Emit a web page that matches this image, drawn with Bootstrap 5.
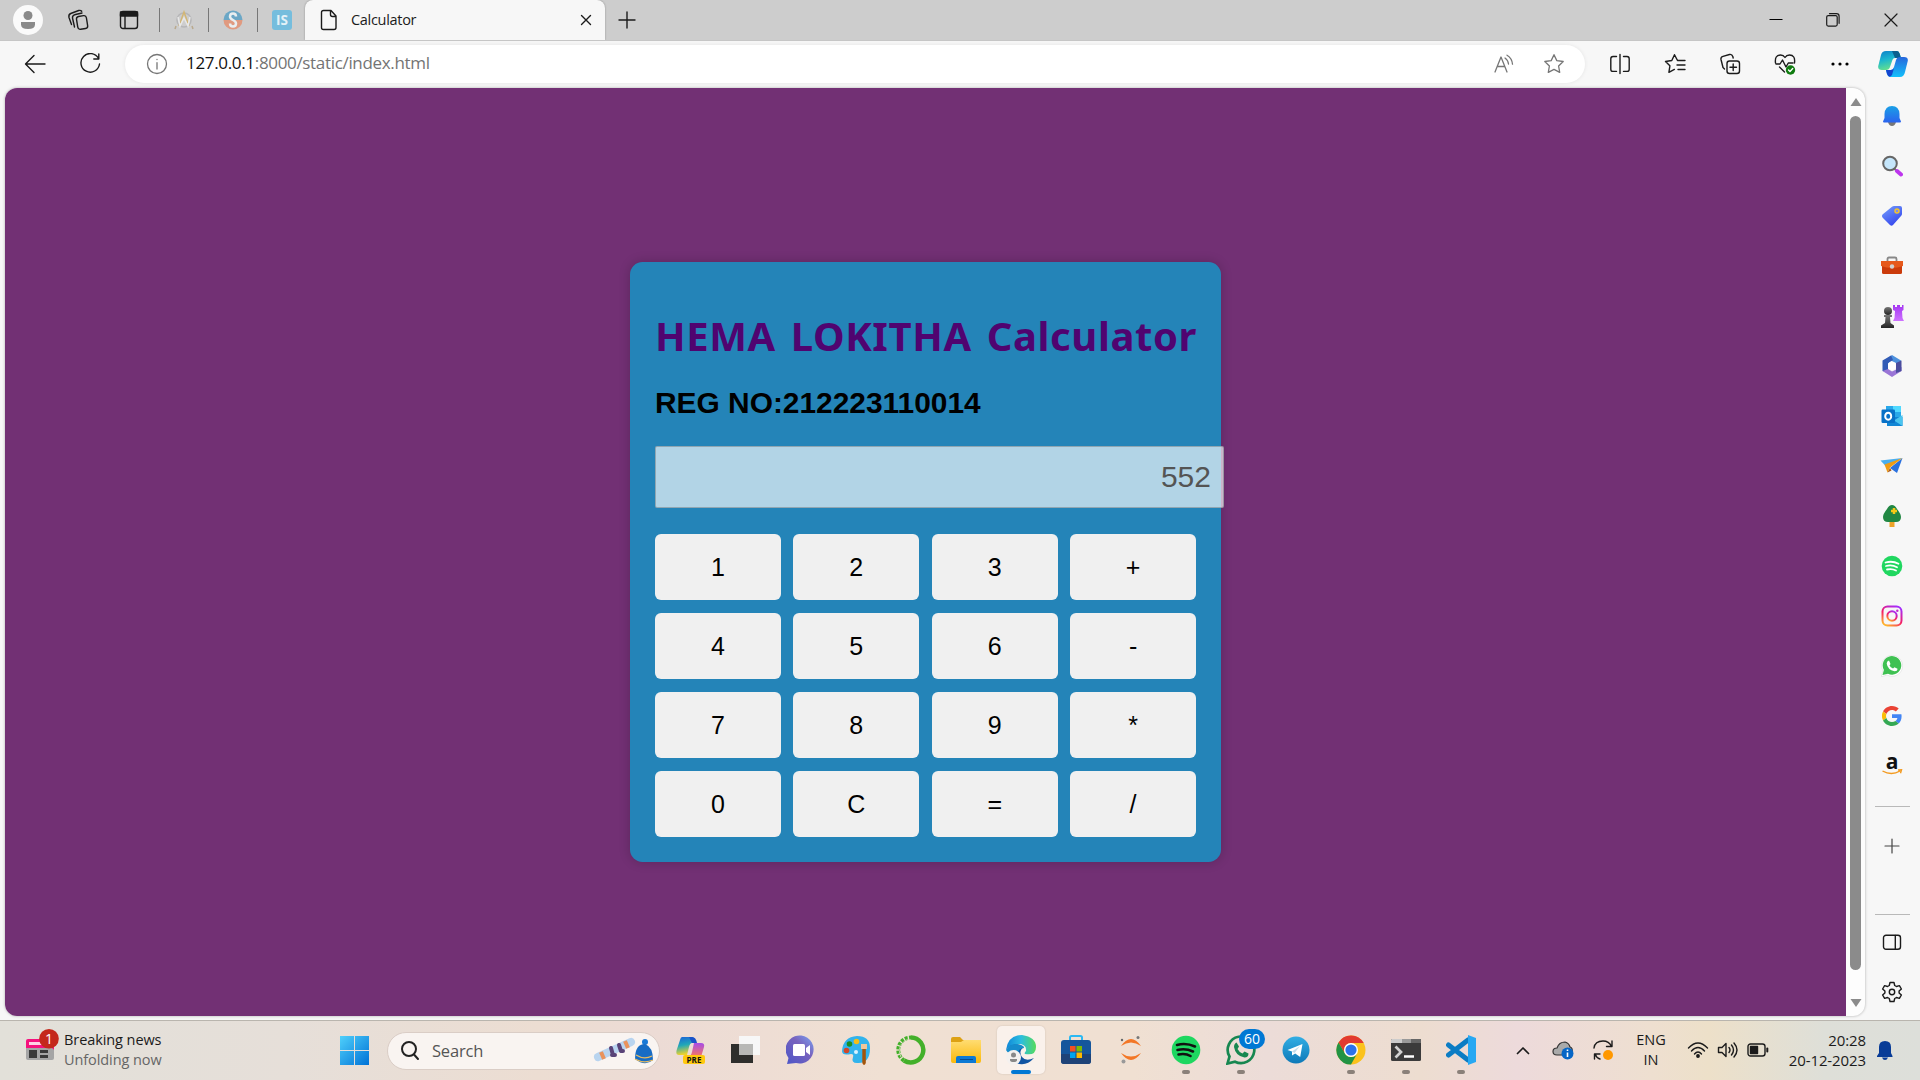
<!DOCTYPE html>
<html lang="en">
<head>
<meta charset="utf-8">
<meta name="viewport" content="width=device-width, initial-scale=1">
<title>Calculator</title>
<link href="https://cdn.jsdelivr.net/npm/bootstrap@5.3.0/dist/css/bootstrap.min.css" rel="stylesheet">
<style>
body{width:1920px;height:1080px;overflow:hidden;background:#f7f7f7;font-family:"Open Sans","Noto Sans",sans-serif;color:#1b1b1b;line-height:1.2}
svg{display:block;flex:none}
.ln{fill:none;stroke:currentColor;stroke-width:1.4;stroke-linecap:round;stroke-linejoin:round}
.tabstrip{height:40px;background:#cdcdcd}
.slot{display:flex;align-items:center;justify-content:center;flex:none;height:100%}
.pinned{width:49px;height:24px;border-left:1px solid #777}
.active-tab{width:300px;height:40px;background:#f7f7f7;border-radius:8px 8px 0 0;font-size:14.5px;padding:0 9px 0 14px;box-shadow:0 0 2px rgba(0,0,0,.35);clip-path:inset(0 -4px 0 -4px)}
.tab-name{letter-spacing:-.3px;margin-left:12px}
.toolbar{height:48px;background:#f7f7f7;border-top:1px solid #c6c6c6;padding:0 0 2px 8px}
.omnibox{width:1460px;height:38px;margin:0 7px;padding:0 6px 0 21px;background:#fff;border-radius:19px;box-shadow:0 0 4px rgba(0,0,0,.08);color:#767676}
.url{font-size:17px;letter-spacing:-.33px;margin-left:18px;color:#747474;white-space:nowrap}
.url b{font-weight:400;color:#111}
.stage{height:932px}
.viewport{width:1860px;height:928px;margin-left:5px;border-radius:12px;background:#fdfdfd;box-shadow:0 0 3px rgba(0,0,0,.3)}
.canvas{width:1841px;background:#723074;padding-top:174px}
.scroller{width:19px;padding:10px 0 9px}
.thumb{width:11px;height:854px;border-radius:6px;background:#8b8b8b;margin-top:10px}
.calc{width:591px;height:600px;padding:25px;border-radius:12.5px;background:#2484b8;box-shadow:0 0 12px rgba(0,0,0,.2);font-family:"Liberation Sans",Arial,sans-serif}
.calc h1{font:700 40px/50px "Noto Sans",sans-serif;color:#500470;margin:24px 0 0;white-space:nowrap;letter-spacing:.6px;word-spacing:4px}
.calc h2{font-size:29.9px;font-weight:700;line-height:36px;margin:24px 0 0;color:#000}
.display{width:569px;height:62px;margin:25px 0 26px;padding:0 12px;font-size:30px;font-family:inherit;color:#545454;background:rgba(255,255,255,.65);border:1px solid rgba(110,120,125,.5);border-radius:2px;text-align:right;opacity:1}
.keys{display:grid;grid-template-columns:repeat(4,1fr);gap:13px 12.5px}
.keys .btn{height:66px;padding:2px 0 0;border:0;border-radius:6px;background:#f0f0f0;color:#000;font-size:25px}
.side{width:54px;padding-top:3px}
.side .slot{height:50px;width:54px}
.rule{width:35px;height:1px;background:#b9b9b9}
.taskbar{height:60px;border-top:1px solid #b9b5ae;background:linear-gradient(90deg,#e2e0d9 0,#e6dfd9 15%,#ecddd2 28%,#ecdbd5 34%,#f0e0d3 46%,#f0e0d2 59%,#ecdcd8 66%,#edddd0 74%,#eddadb 79%,#eedfd0 86%,#ede0c9 89%,#dedfd8 95%,#dddfda 100%)}
.news{width:276px;margin-left:64px;padding-bottom:2px;font-size:14.5px;line-height:20px;letter-spacing:-.08px}
.newsicon{left:24px;top:8px}
.searchbox{width:273px;height:38px;margin:0 3px 0 18px;border-radius:19px;background:#f9f4f1;border:1px solid #dacdc6;padding:0 5px 0 12px;font-size:16.5px;color:#555}
.searchbox span{margin-left:12px;letter-spacing:-.2px}
.task{width:55px;height:59px;padding-bottom:1px}
.task.on::before{content:"";position:absolute;width:48px;height:48px;border-radius:5px;background:#faf1eb;box-shadow:0 0 2px rgba(0,0,0,.15)}
.task svg{position:relative}
.task.run::after,.task.on::after{content:"";position:absolute;left:23.5px;top:49px;width:8px;height:4px;border-radius:2px;background:#8a8079}
.task.on::after{left:18px;width:20px;background:#0078d4}
.count{left:26px;top:8px;width:26px;height:20px;border-radius:10px;background:#0078d4;color:#fff;font-size:14px;line-height:19px;text-align:center}
.tray{font-size:14.5px;line-height:20px;padding-bottom:1px}
.clock{width:90px;white-space:nowrap;font-size:15px;letter-spacing:-.1px;padding-bottom:1px}
</style>
<script src="https://cdn.jsdelivr.net/npm/bootstrap@5.3.0/dist/js/bootstrap.bundle.min.js"></script>
</head>
<body class="d-flex flex-column">
<svg width="0" height="0" class="position-absolute"><defs>
<linearGradient id="gBlue" x2="0" y2="1"><stop stop-color="#1aa0e6"/><stop offset="1" stop-color="#2b63ee"/></linearGradient>
<linearGradient id="gCopA" x2=".3" y2="1"><stop stop-color="#0b7fc9"/><stop offset=".5" stop-color="#1bb6cf"/><stop offset="1" stop-color="#62df90"/></linearGradient>
<linearGradient id="gCopB" x2="0" y2="1"><stop stop-color="#2767dc"/><stop offset="1" stop-color="#13c0fb"/></linearGradient>
<linearGradient id="gPreA" x2=".2" y2="1"><stop stop-color="#1b62d8"/><stop offset=".5" stop-color="#21a8b8"/><stop offset="1" stop-color="#f0d32c"/></linearGradient>
<linearGradient id="gPreB" x2="0" y2="1"><stop stop-color="#a64be8"/><stop offset="1" stop-color="#fa7a5c"/></linearGradient>
<linearGradient id="gWin" x2="1" y2="1"><stop stop-color="#4fd0fb"/><stop offset="1" stop-color="#0072d6"/></linearGradient>
<linearGradient id="gIg" x1=".2" y1="1" x2=".8" y2="0"><stop stop-color="#ffb52b"/><stop offset=".45" stop-color="#f51e64"/><stop offset="1" stop-color="#a32cff"/></linearGradient>
<linearGradient id="gTag" x2=".6" y2="1"><stop stop-color="#77a1fb"/><stop offset="1" stop-color="#3547ee"/></linearGradient>
<linearGradient id="gChat" x1="0" y1="1" x2="1" y2="0"><stop stop-color="#4b55c8"/><stop offset=".6" stop-color="#7863be"/><stop offset="1" stop-color="#7aa5f4"/></linearGradient>
<linearGradient id="gEdge" x2="1"><stop stop-color="#0f86d8"/><stop offset=".5" stop-color="#2cbde0"/><stop offset="1" stop-color="#55db5b"/></linearGradient>
<linearGradient id="gFold" x2="0" y2="1"><stop stop-color="#ffdc72"/><stop offset="1" stop-color="#fbb90a"/></linearGradient>
<linearGradient id="gTele" x2="0" y2="1"><stop stop-color="#32aee4"/><stop offset="1" stop-color="#0d79b8"/></linearGradient>
<linearGradient id="gDark" x2="0" y2="1"><stop stop-color="#777"/><stop offset="1" stop-color="#252525"/></linearGradient>
<linearGradient id="gPurp" x2="0" y2="1"><stop stop-color="#a436f2"/><stop offset="1" stop-color="#ce72ff"/></linearGradient>
</defs></svg>

<header class="tabstrip d-flex align-items-center">
  <div class="slot" style="width:56px"><svg width="30" height="30" viewBox="0 0 30 30"><circle cx="15" cy="15" r="15" fill="#fafafa"/><circle cx="15" cy="10.500" r="4.500" fill="#8a8a8a"/><path d="M8 17h14v2.500q0 4.500-7 4.500t-7-4.500z" fill="#8a8a8a"/></svg></div>
  <div class="slot" style="width:43px"><svg class="ln" width="22" height="22" viewBox="0 0 22 22"><rect x="10" y="7" width="10" height="13" rx="2.500" transform="rotate(-9 15 13)"/><path d="M7.500 18 5.500 9q-.3-2.500 2-3.200L15 4M4.500 15.500 2 8.500q-.7-3 1.700-4l8-3q2-.5 3 .8"/></svg></div>
  <div class="slot" style="width:60px"><svg class="ln" width="20" height="20" viewBox="0 0 20 20"><rect x="1.500" y="1.500" width="17" height="17" rx="2.500"/><path d="M1.500 2h17v4h-17z" fill="currentColor"/><path d="M6 6v12"/></svg></div>
  <div class="slot pinned"><svg width="22" height="22" viewBox="0 0 22 22" fill="none" stroke-width="1.500"><circle cx="11" cy="11" r="7" stroke="#b6b6b8"/><path d="M6 17 11 3l5 14" stroke="#d2b675"/><path d="M5 8l2 9 4-8 4 8 2-9" stroke="#e7e7e7"/><path d="M3 17l-1 3M19 17l1 3" stroke="#b9a98d"/></svg></div>
  <div class="slot pinned"><svg width="20" height="20" viewBox="0 0 20 20"><path d="M.5 10a9.500 9.500 0 0 1 19 0z" fill="#6ba7c6"/><path d="M.5 10a9.500 9.500 0 0 0 19 0z" fill="#e09a80"/><path d="M13 6.500q0-3-3-3T7 6.500q0 2 3 3.500t3 3.500q0 3-3 3t-3-3" fill="none" stroke="#e9eef0" stroke-width="2.500"/></svg></div>
  <div class="slot pinned" style="width:48px"><svg width="20" height="20" viewBox="0 0 20 20"><rect width="20" height="20" rx="3" fill="#75bddd"/><text x="10" y="15" text-anchor="middle" font-family="Open Sans" font-weight="700" font-size="13.500" fill="#e3f1f7">IS</text></svg></div>
  <div class="active-tab d-flex align-items-center">
    <svg class="ln" width="20" height="22" viewBox="0 0 20 22"><path d="M4.500 1.500H12L17 7v11.500q0 2-2 2H4.500q-2 0-2-2v-15q0-2 2-2zM11.500 2v3.500q0 2 2 2h3"/></svg>
    <span class="tab-name">Calculator</span>
    <div class="slot ms-auto" style="width:20px"><svg class="ln" width="12" height="12" viewBox="0 0 12 12"><path d="M1.500 1.500l9 9m0-9-9 9"/></svg></div>
  </div>
  <div class="slot" style="width:43px"><svg class="ln" width="18" height="18" viewBox="0 0 18 18"><path d="M9 1v16M1 9h16"/></svg></div>
  <div class="slot ms-auto" style="width:56px"><svg width="14" height="14"><path d="M0.500 6.500h13" stroke="#000"/></svg></div>
  <div class="slot" style="width:58px"><svg class="ln" width="14" height="14" viewBox="0 0 14 14" style="stroke-width:1.200"><rect x=".7" y="2.600" width="10.500" height="10.500" rx="1.500"/><path d="M3.500.7h7q2.600 0 2.600 2.600v7"/></svg></div>
  <div class="slot" style="width:58px"><svg class="ln" width="14" height="14" viewBox="0 0 14 14" style="stroke-width:1.200"><path d="M1 1l12 12M13 1 1 13"/></svg></div>
</header>

<nav class="toolbar d-flex align-items-center">
  <div class="slot" style="width:54px"><svg class="ln" width="22" height="20" viewBox="0 0 22 20"><path d="M10 1.500 1.500 10l8.500 8.500M2 10h19"/></svg></div>
  <div class="slot" style="width:56px"><svg class="ln" width="22" height="22" viewBox="0 0 22 22"><path d="M19.500 5.500A9.300 9.300 0 1 0 20.500 11M19.800 1v5h-5"/></svg></div>
  <div class="omnibox d-flex align-items-center">
    <svg class="ln" width="22" height="22" viewBox="0 0 22 22" style="stroke-width:1.300"><circle cx="11" cy="11" r="9.500"/><path d="M11 9.700V16M11 6.300v.3"/></svg>
    <span class="url"><b>127.0.0.1</b>:8000/static/index.html</span>
    <div class="slot ms-auto" style="width:50px"><svg class="ln" width="20" height="20" viewBox="0 0 20 20" style="stroke-width:1.300"><path d="M1 18 7 3l6 15M3.300 12.500h7.500M11 4q3 2 3.500 6M13 1.200q5 3 5.500 9"/></svg></div>
    <div class="slot" style="width:50px"><svg class="ln" width="22" height="22" viewBox="0 0 22 22" style="stroke-width:1.300"><path d="M11 1.700l2.800 5.900 6.400.9-4.600 4.500 1.100 6.400-5.700-3-5.700 3 1.100-6.400L1.800 8.500l6.400-.9z"/></svg></div>
  </div>
  <div class="slot" style="width:55px"><svg class="ln" width="22" height="22" viewBox="0 0 22 22"><path d="M7.500 3.500H4q-2.200 0-2.200 2.200v10.500q0 2.200 2.200 2.200h3.500M14.500 3.500H18q2.200 0 2.200 2.200v10.500q0 2.200-2.200 2.200h-3.500M11 1.500v19"/></svg></div>
  <div class="slot" style="width:55px"><svg class="ln" width="22" height="22" viewBox="0 0 22 22"><path d="M13.500 7.500 10.500 1.700 7.800 7.500l-6.300 1 4.400 4.300-1 6.500 5.500-2.900M14 7.500h7M13 12h8M14 16.500h7"/></svg></div>
  <div class="slot" style="width:55px"><svg class="ln" width="22" height="22" viewBox="0 0 22 22"><rect x="8" y="8" width="12.500" height="12.500" rx="2.500"/><path d="M14.200 11v6.500M11 14.200h6.500M5.500 16 4 14.500 2 6.500Q1.500 4 4 3.300l6.500-1.800q2.500-.5 3.300 2l.4 1.500"/></svg></div>
  <div class="slot" style="width:55px"><svg class="ln" width="22" height="22" viewBox="0 0 22 22"><path d="M1.500 10Q.5 2 6.500 2q3 0 4.500 2.500Q12.500 2 15.500 2q6 0 5 8M5.500 14l5 5M2 11h4l2.500-4 3.500 7 2.300-4H19"/><circle cx="16.500" cy="17" r="4.700" fill="#0f7b0f" stroke="none"/><path d="M14.500 17l1.500 1.500 2.700-3" stroke="#fff"/></svg></div>
  <div class="slot" style="width:55px"><svg width="18" height="4" viewBox="0 0 18 4"><circle cx="2" cy="2" r="1.600"/><circle cx="9" cy="2" r="1.600"/><circle cx="16" cy="2" r="1.600"/></svg></div>
  <div class="slot" style="width:51px"><svg width="30" height="28" viewBox="0 0 30 28"><path d="M8 1h11q2 0 2.800 3L23 8h-6q-2 0-2.600 2L12 17q-1 3-4 3H4q-5 0-3.500-5L3 5q1-4 5-4z" fill="url(#gCopA)"/><path d="M14 1h5q2 0 2.800 3L23 8h-6z" fill="#0b5f8f"/><path d="M22 27H12q-2 0-3-3l-1-4h5q2 0 3-3l2-7q1-3 4-3h4q5 0 3.500 5l-2.500 10q-1 5-5 5z" fill="url(#gCopB)"/><path d="M8 20h5q2 0 3-2l-2 7q-3 4-5-1z" fill="#1345cf"/></svg></div>
</nav>

<div class="stage d-flex">
  <main class="viewport d-flex overflow-hidden">
    <div class="canvas d-flex justify-content-center align-items-start">
      <section class="calc">
        <h1>HEMA LOKITHA Calculator</h1>
        <h2>REG NO:212223110014</h2>
        <input class="display d-block" value="552" disabled>
        <div class="keys">
          <button class="btn">1</button><button class="btn">2</button><button class="btn">3</button><button class="btn">+</button>
          <button class="btn">4</button><button class="btn">5</button><button class="btn">6</button><button class="btn">-</button>
          <button class="btn">7</button><button class="btn">8</button><button class="btn">9</button><button class="btn">*</button>
          <button class="btn">0</button><button class="btn">C</button><button class="btn">=</button><button class="btn">/</button>
        </div>
      </section>
    </div>
    <div class="scroller d-flex flex-column align-items-center justify-content-between">
      <svg width="12" height="8"><path d="M6 0l5.500 8H.5z" fill="#8b8b8b"/></svg>
      <div class="thumb mb-auto"></div>
      <svg width="12" height="8"><path d="M6 8 .5 0h11z" fill="#8b8b8b"/></svg>
    </div>
  </main>
  <aside class="side d-flex flex-column align-items-center">
    <div class="slot"><svg width="20" height="22" viewBox="0 0 20 22"><path d="M6 17h8q-1 4-4 4t-4-4z" fill="#777"/><path d="M2.500 9Q3 1 10 1t7.500 8v4l1.500 3.500q0 1-1 1H2q-1 0-1-1L2.500 13z" fill="url(#gBlue)"/></svg></div>
    <div class="slot"><svg width="22" height="22" viewBox="0 0 22 22"><path d="M13 13.500l6 5" stroke="#777" stroke-width="2"/><path d="M16 16l4 3.500" stroke="#bd35ed" stroke-width="4" stroke-linecap="round"/><circle cx="9" cy="8.500" r="6.800" fill="#c5e6fb" stroke="#666" stroke-width="2"/></svg></div>
    <div class="slot"><svg width="22" height="22" viewBox="0 0 22 22"><path d="M13 1h6q2 0 2 2v6q0 1-1 2l-8 9q-1.500 1.500-3 0l-7.500-7.500q-1.200-1.500 0-3L11 1.800q1-.8 2-.8z" fill="url(#gTag)"/><circle cx="16" cy="6" r="2" fill="#7c8cf0" stroke="#f3c42c" stroke-width="1.500"/></svg></div>
    <div class="slot"><svg width="24" height="20" viewBox="0 0 24 20"><path d="M7.500 6V3q0-1.500 1.500-1.500h6q1.500 0 1.500 1.500v3" fill="none" stroke="#888" stroke-width="1.800"/><rect x="2" y="5" width="20" height="13" rx="1.500" fill="#cb3b0b"/><path d="M1 5h22v5q-11 4-22 0z" fill="#e6591c"/><circle cx="12" cy="10.500" r="2.200" fill="#d1d1d1"/></svg></div>
    <div class="slot"><svg width="24" height="24" viewBox="0 0 24 24"><path d="M13 1h2v2h2V1h3v2h2V1h1.500v5l-1.500 1 .5 7 1.500 3H13l1.500-3 .5-7-2-1z" fill="url(#gPurp)"/><circle cx="8" cy="7" r="4" fill="url(#gDark)"/><path d="M4 11h8v2h-2l.5 6 3.500 2.500V24H1v-2.500L5 19l.5-6H4z" fill="url(#gDark)"/></svg></div>
    <div class="slot"><svg width="22" height="22" viewBox="0 0 22 22"><path d="M11 0l9 5.500v10L15 13V8l-5-2.500-3 3V3z" fill="#4d91dd"/><path d="M10 .5 1.500 5.500V16L7 17V8l5-3z" fill="#315bb6"/><path d="M1.500 16l9.500 6 9.500-6v-4L11 16.500 7 14z" fill="#9a75d6"/><path d="M15 8l5.500-2.500V16L15 18z" fill="#4b4d9e"/><circle cx="11" cy="11" r="4" fill="#fff"/></svg></div>
    <div class="slot"><svg width="22" height="22" viewBox="0 0 22 22"><path d="M5 1h15v13H5z" fill="#29a8ea"/><path d="M12 1h8v6h-8z" fill="#50d9ff"/><path d="M6 12h15.500v9H6z" fill="#1186d5"/><path d="M21.500 10v11L13 15.500z" fill="#4bc5ef"/><rect x=".5" y="4.500" width="13.500" height="13.500" rx="1.200" fill="#0871c7"/><ellipse cx="7.200" cy="11.200" rx="3" ry="3.500" fill="none" stroke="#fff" stroke-width="2"/></svg></div>
    <div class="slot"><svg width="24" height="20" viewBox="0 0 24 20"><path d="M.5 4.500 22.500 2l-16 9z" fill="#4aaeee"/><path d="M22.500 2 10 12l7 5z" fill="#2a71df"/><path d="M22.500 2 4.500 8.500l3 8 2.500-5z" fill="#f09c14"/><path d="M10 12l-2.500 4.500 4-2z" fill="#a95716"/></svg></div>
    <div class="slot"><svg width="22" height="24" viewBox="0 0 22 24"><path d="M8.500 16h5v7h-5z" fill="#eda329"/><path d="M11 1q3 0 5 4 4 5 4 8 0 5-5 5H7q-5 0-5-5 0-3 4-8 2-4 5-4z" fill="#218743"/><path d="M13 4v6M10 7h6" stroke="#f6c917" stroke-width="2.500"/></svg></div>
    <div class="slot"><svg width="22" height="22" viewBox="0 0 22 22"><circle cx="11" cy="11" r="10.300" fill="#20d760"/><path d="M4.500 7.500q7-2 13 1.200M5 11q6-1.500 11 1.200M6 14.500q5-1.200 9 1" fill="none" stroke="#fff" stroke-width="1.800" stroke-linecap="round"/></svg></div>
    <div class="slot"><svg width="22" height="22" viewBox="0 0 22 22" fill="none" stroke="url(#gIg)" stroke-width="2"><rect x="1.500" y="1.500" width="19" height="19" rx="5"/><circle cx="11" cy="11" r="4.700"/><circle cx="16.300" cy="5.700" r=".6" stroke="#c22eca" stroke-width="1.300"/></svg></div>
    <div class="slot"><svg width="22" height="22" viewBox="0 0 22 22"><path d="M0 22l2-6A10.500 10.500 0 1 1 6 20z" fill="#fff" stroke="#ddd" stroke-width=".6"/><path d="M1.500 20l1.400-5A9.300 9.300 0 1 1 7 18.800z" fill="#3fc152"/><path d="M8 5.500 9.500 9l-1 1.500q1 2 3.500 3l1.500-1.300 3 1.500q0 2.500-3 2.500-7-1.500-7.800-7.700Q5.800 6 8 5.500z" fill="#fff"/></svg></div>
    <div class="slot"><svg width="20" height="20" viewBox="0 0 48 48"><path fill="#ea4335" d="M24 9.500c3.500 0 6.700 1.200 9.200 3.600l6.900-6.900C35.900 2.400 30.500 0 24 0 14.600 0 6.500 5.400 2.600 13.200l8 6.200C12.400 13.700 17.700 9.500 24 9.500z"/><path fill="#4285f4" d="M47 24.500c0-1.600-.2-3.100-.4-4.500H24v9h12.900c-.6 3-2.300 5.500-4.800 7.200l7.700 6C44.400 38 47 31.800 47 24.500z"/><path fill="#fbbc05" d="M10.500 28.600a14.500 14.500 0 0 1 0-9.200l-8-6.200a24 24 0 0 0 0 21.600z"/><path fill="#34a853" d="M24 48c6.500 0 11.900-2.100 15.900-5.800l-7.700-6c-2.200 1.500-4.900 2.300-8.200 2.300-6.300 0-11.600-4.200-13.500-9.900l-8 6.200C6.500 42.600 14.600 48 24 48z"/></svg></div>
    <div class="slot"><svg width="24" height="36" viewBox="0 0 24 36"><text x="12" y="21" text-anchor="middle" font-family="Open Sans" font-weight="700" font-size="21" fill="#111">a</text><path d="M2.500 23q9 5 17.500 0M18 22l3.500-.3-1 3.500" fill="none" stroke="#f39a1f" stroke-width="1.400"/></svg></div>
    <div class="rule" style="margin-top:15px"></div>
    <div class="slot" style="height:78px"><svg class="ln" width="16" height="16" viewBox="0 0 16 16" style="stroke-width:1.200;color:#444"><path d="M8 1v14M1 8h14"/></svg></div>
    <div class="rule" style="margin-top:29px"></div>
    <div class="slot" style="margin-top:2px"><svg class="ln" width="20" height="17" viewBox="0 0 20 17"><rect x="1.500" y="1.200" width="17" height="14" rx="2.500"/><path d="M13.300 1.500v13.500"/></svg></div>
    <div class="slot"><svg class="ln" width="22" height="22" viewBox="0 0 22 22"><circle cx="11" cy="11" r="2.700"/><path d="M9 1.500h4l.7 3 1.700 1 3-.9 2 3.400-2.300 2.100v1.800l2.300 2.100-2 3.400-3-.9-1.700 1-.7 3H9l-.7-3-1.700-1-3 .9-2-3.400 2.300-2.100v-1.800L1.600 8l2-3.400 3 .9 1.700-1z"/></svg></div>
  </aside>
</div>

<footer class="taskbar d-flex align-items-center position-relative">
  <div class="newsicon position-absolute"><svg width="36" height="34" viewBox="0 0 36 34"><rect x="2" y="10" width="28" height="12" rx="2" fill="#f5117d"/><path d="M5 13h14v3H5z" fill="#ffd0e4"/><path d="M2 19h26l2 2v8q0 2-2 2H4q-2 0-2-2z" fill="#a5a5a5"/><path d="M5 21h8v8H5zM16 21h8v3h-8zM16 26h8v3h-8z" fill="#393939"/><circle cx="25" cy="9.800" r="9.800" fill="#c4281c"/><text x="25" y="15" text-anchor="middle" font-family="Open Sans" font-size="14" fill="#fff">1</text></svg></div>
  <div class="news"><div>Breaking news</div><div style="color:#666">Unfolding now</div></div>
  <svg width="29" height="29" viewBox="0 0 29 29"><path d="M0 0h14v14H0zM15 0h14v14H15zM0 15h14v14H0zM15 15h14v14H15z" fill="url(#gWin)"/></svg>
  <div class="searchbox d-flex align-items-center">
    <svg class="ln" width="20" height="20" viewBox="0 0 20 20" style="stroke-width:2;color:#222"><circle cx="9" cy="8" r="7"/><path d="M14 13.500l4 4.500"/></svg>
    <span>Search</span>
    <svg class="ms-auto" width="62" height="28" viewBox="0 0 62 28"><path d="M6 20 39 5" stroke="#b9d4ef" stroke-width="8" stroke-linecap="round"/><path d="M9 15l3 7M33 4l3 7" stroke="#e9935c" stroke-width="4"/><path d="M19 11l2 7M27 8l2 6M20 18l3 0M29 14l2 0" stroke="#594377" stroke-width="4" stroke-linecap="round"/><circle cx="53" cy="5" r="3" fill="#1979d7"/><path d="M43 22Q43 7 53 7q8 3 8 16-8 7-18-1z" fill="#176cc4"/><path d="M44 18q8 5 16 1M43 22q9 5 18 1" fill="none" stroke="#e9bc60" stroke-width="1.200"/></svg>
  </div>
  <div class="task slot position-relative"><svg width="30" height="30" viewBox="0 0 30 30"><path d="M6 2h10q3 0 4 6h-4q-2 0-3 4l-2 8H3q-4 0-2-6L4 5q.7-3 2-3z" fill="url(#gPreA)"/><path d="M13 2h3q4 0 5 6h-5z" fill="#1852c9"/><path d="M18 8h7q4 0 3 4l-3 10H11q4 0 5-5z" fill="url(#gPreB)"/><rect x="7" y="20" width="22" height="9" rx="2" fill="#ffc90e"/><text x="18" y="27.500" text-anchor="middle" font-family="Open Sans" font-weight="700" font-size="8" fill="#111">PRE</text></svg></div>
  <div class="task slot position-relative"><svg width="30" height="30" viewBox="0 0 30 30"><path d="M0 9h22v19H0z" fill="#2e2e2c"/><path d="M8 1h21v19H8z" fill="#f7f7f7"/><path d="M8 9h14v11H8z" fill="#b8b8b6"/></svg></div>
  <div class="task slot position-relative"><svg width="30" height="30" viewBox="0 0 30 30"><path d="M1 29l1.500-6A14 14 0 1 1 10 28z" fill="url(#gChat)"/><rect x="7" y="9" width="12" height="12" rx="1.500" fill="#fff"/><path d="M20 13l4-3v10l-4-3z" fill="#fff"/></svg></div>
  <div class="task slot position-relative"><svg width="30" height="30" viewBox="0 0 30 30"><path d="M16 1q13 0 13 12 0 16-13 15-6 0-4-6 1-3-2-3-9 2-9-3Q2 2 16 1z" fill="#32b3ec"/><circle cx="5.500" cy="15.500" r="2.800" fill="#cf482a"/><circle cx="8.500" cy="9" r="2.800" fill="#188e24"/><circle cx="15.500" cy="6.500" r="2.800" fill="#f3be17"/><circle cx="15" cy="17" r="2" fill="#d8f3ff"/><path d="M20 9h6v5h-6z" fill="#f0c69a"/><path d="M21.300 14h3.500v14q-1.700 4-3.500 0z" fill="#a4550b"/></svg></div>
  <div class="task slot position-relative"><svg width="30" height="30" viewBox="0 0 30 30" fill="none" stroke="#43b02a"><path d="M15 2.500A12.500 12.500 0 1 1 8 25.500" stroke-width="4.500"/><path d="M8 25.500A12.500 12.500 0 0 1 15 2.500" stroke-width="4" stroke-dasharray="3 1.300"/><path d="M5 22Q0 10 12 4" stroke="#eedfd4" stroke-width=".8" stroke-dasharray="2 2"/></svg></div>
  <div class="task slot position-relative"><svg width="30" height="28" viewBox="0 0 30 28"><path d="M0 3q0-2 2-2h7l3 3h16v5H0z" fill="#dda114"/><path d="M0 6h10l3-2h17v21q0 2-2 2H2q-2 0-2-2z" fill="url(#gFold)"/><path d="M5 27v-5q0-2 2-2h16q2 0 2 2v5z" fill="#0c79d4"/><path d="M9 23.500h13" stroke="#064c91"/></svg></div>
  <div class="task slot on position-relative"><svg width="30" height="30" viewBox="0 0 30 30"><path d="M4 10Q0 22 10 28q10 4 18-5-8 4-12-1-4-6 2-10-8-5-14-2z" fill="#1155a3"/><path d="M0 15Q2 0 16 0q14 2 14 12 0 9-11 7-1-1 1-3 1-7-8-7Q4 9 0 15z" fill="url(#gEdge)"/><path d="M0 15Q4 8 11 9q7 1 7 4-6 0-6 7Q4 22 0 15z" fill="#168ccc"/><circle cx="7.500" cy="22.500" r="7.500" fill="#f4f1ef"/><circle cx="7.500" cy="20" r="2.500" fill="#888"/><path d="M4 24h7v1q0 2-3.500 2T4 25z" fill="#888"/></svg></div>
  <div class="task slot position-relative"><svg width="30" height="30" viewBox="0 0 30 30"><path d="M9 8V2.500Q9 1 10.500 1h9Q21 1 21 2.500V8" fill="none" stroke="#2cb9f3" stroke-width="2"/><rect y="5" width="30" height="24" rx="3" fill="#15569c"/><path d="M0 19h30v7q0 3-3 3H3q-3 0-3-3z" fill="#1e4378"/><path d="M9 11h5.500v5.500H9z" fill="#f25022"/><path d="M15.500 11H21v5.500h-5.500z" fill="#7fba00"/><path d="M9 17.500h5.500V23H9z" fill="#00a4ef"/><path d="M15.500 17.500H21V23h-5.500z" fill="#ffb900"/></svg></div>
  <div class="task slot position-relative"><svg width="24" height="30" viewBox="0 0 24 30"><path d="M2 11q10-14 20 0-10-7-20 0zM2 18q10 7 20 0-10 14-20 0z" fill="#f37726"/><circle cx="3" cy="5" r="1.200" fill="#666"/><circle cx="19" cy="2.500" r="1.500" fill="#777"/><circle cx="4.500" cy="26.500" r="2" fill="#999"/></svg></div>
  <div class="task slot run position-relative"><svg width="30" height="30" viewBox="0 0 30 30"><circle cx="15" cy="15" r="14.300" fill="#1ed760"/><path d="M6 10q9-2.500 18 1.500M6.500 15q8-2 15.500 1.500M7.500 19.500q7-1.500 12 1.500" fill="none" stroke="#111" stroke-width="2.600" stroke-linecap="round"/></svg></div>
  <div class="task slot run position-relative"><svg width="30" height="30" viewBox="0 0 30 30"><path d="M1.500 28.500l2-7A13.300 13.300 0 1 1 9 26.700z" fill="none" stroke="#178750" stroke-width="2.700"/><path d="M10.500 7.500l2.500 4-1.500 2.500q1.500 3 5 4.500l2-2 4 2q0 4-4 4Q9.500 21 8 12q0-3.500 2.500-4.500z" fill="#178750"/></svg><span class="count position-absolute">60</span></div>
  <div class="task slot position-relative"><svg width="28" height="28" viewBox="0 0 28 28"><circle cx="14" cy="14" r="13.500" fill="url(#gTele)"/><path d="M5.500 14 20.500 8l-2.300 13-5-3.600L10 19.500v-4z" fill="#fff"/><path d="M10 15.500l8-5.500-5.500 7z" fill="#c3dceb"/></svg></div>
  <div class="task slot run position-relative"><svg width="30" height="30" viewBox="0 0 30 30"><circle cx="15" cy="15" r="14.500" fill="#fbc21c"/><path d="M2.500 7.500A14.500 14.500 0 0 1 27.700 8H15a7 7 0 0 0-6 10.500z" fill="#e23a30"/><path d="M2.500 7.500A14.500 14.500 0 0 0 15 29.500l6.200-11A7 7 0 0 1 9 18.500z" fill="#229344"/><circle cx="15" cy="15" r="7" fill="#fff"/><circle cx="15" cy="15" r="5.600" fill="#2d72ea"/></svg></div>
  <div class="task slot run position-relative"><svg width="30" height="24" viewBox="0 0 30 24"><rect y="1" width="30" height="22" rx="1.500" fill="#3b3b3b"/><path d="M1 1h10v4H0V2z" fill="#ccc"/><path d="M11 1h9v4h-9z" fill="#999"/><path d="M20 1h10v4H20z" fill="#666"/><path d="M4.500 8.500 10 14l-5.500 5.500" fill="none" stroke="#d2d2d2" stroke-width="2.700"/><path d="M13 18.500h10" stroke="#fff" stroke-width="2.500"/></svg></div>
  <div class="task slot run position-relative"><svg width="30" height="30" viewBox="0 0 30 30"><path d="M2.500 10 22 25M2.500 20 22 5" stroke="#0b7cc4" stroke-width="5" stroke-linecap="round"/><path d="M22 0l8 3v24l-8 3z" fill="#27a8f2"/></svg></div>

  <div class="tray d-flex align-items-center h-100 ms-auto">
    <div class="slot" style="width:40px"><svg class="ln" width="14" height="9" viewBox="0 0 14 9" style="stroke-width:1.700"><path d="M1.500 7.500 7 2l5.500 5.500"/></svg></div>
    <div class="slot" style="width:40px"><svg width="22" height="20" viewBox="0 0 22 20"><path d="M5 15Q1 15 1 11.500T5 8q2-6 8-6 4 1 5 5 3 1 2 5l-2 3z" fill="#aaa" stroke="#333" stroke-width="1.200"/><circle cx="15.500" cy="13.500" r="6" fill="#0766c6"/><path d="M15.500 12.500v4.500M15.500 9.500v1.500" stroke="#fff" stroke-width="1.600"/></svg></div>
    <div class="slot" style="width:40px"><svg class="ln" width="22" height="22" viewBox="0 0 22 22"><path d="M2 9Q3 2 11 2q6 0 8.500 5.500M20 2v5.500h-5.500M8 20q-3.500-1-5-5M2.500 20v-5H8"/><circle cx="16" cy="16" r="5" fill="#ff9800" stroke="none"/></svg></div>
    <div class="slot text-center" style="width:56px">ENG<br>IN</div>
    <div class="slot" style="width:37px"><svg class="ln" width="22" height="18" viewBox="0 0 22 18"><path d="M1.500 7q9.500-10 19 0M4.500 10q6.500-7 13 0M7.500 13q3.500-4 7 0"/><circle cx="11" cy="15" r="1.200" fill="currentColor"/></svg></div>
    <div class="slot" style="width:24px"><svg class="ln" width="22" height="18" viewBox="0 0 22 18"><path d="M1.500 6.500H5l4-4v13l-4-4H1.500zM12 6.500q2 2.500 0 5M14.500 4q4 5 0 10M17 2q6 7 0 14"/></svg></div>
    <div class="slot" style="width:36px"><svg class="ln" width="22" height="14" viewBox="0 0 22 14"><rect x="1" y="1" width="17" height="12" rx="2.500"/><path d="M3.500 3.500h7v7h-7z" fill="currentColor"/><path d="M20.300 5.500v3" stroke-width="2"/></svg></div>
    <div class="clock text-end">20:28<br>20-12-2023</div>
    <div class="slot" style="width:38px;margin-right:16px"><svg width="18" height="20" viewBox="0 0 18 20"><path d="M3 7q0-6 6-6t6 6v6l1.500 3v1H1v-1l2-3zM6 17.500h6q-1 2.500-3 2.500t-3-2.500z" fill="#083c97"/></svg></div>
  </div>
</footer>
</body>
</html>
